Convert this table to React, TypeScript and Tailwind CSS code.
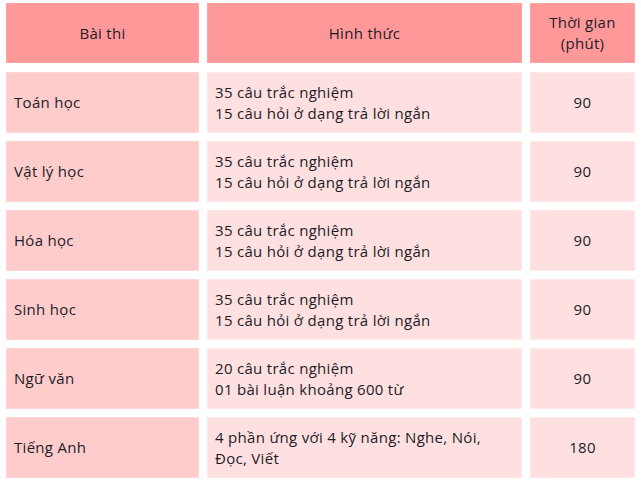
import React from 'react'

type Row = {
  subject: string
  format: string[]
  minutes: number
}

const rows: Row[] = [
  { subject: 'Toán học', format: ['35 câu trắc nghiệm', '15 câu hỏi ở dạng trả lời ngắn'], minutes: 90 },
  { subject: 'Vật lý học', format: ['35 câu trắc nghiệm', '15 câu hỏi ở dạng trả lời ngắn'], minutes: 90 },
  { subject: 'Hóa học', format: ['35 câu trắc nghiệm', '15 câu hỏi ở dạng trả lời ngắn'], minutes: 90 },
  { subject: 'Sinh học', format: ['35 câu trắc nghiệm', '15 câu hỏi ở dạng trả lời ngắn'], minutes: 90 },
  { subject: 'Ngữ văn', format: ['20 câu trắc nghiệm', '01 bài luận khoảng 600 từ'], minutes: 90 },
  { subject: 'Tiếng Anh', format: ['4 phần ứng với 4 kỹ năng: Nghe, Nói,', 'Đọc, Viết'], minutes: 180 },
]

export default function App() {
  return (
    <div className="w-[641px] h-[486px] bg-white pl-[6px] pt-[3px] text-[15px] leading-[21px] tracking-[0.3px] text-[#1c1c28] font-['Open_Sans','Lato',sans-serif]">
      <div className="grid grid-cols-[193px_315px_105px] gap-x-2">
        {/* Header */}
        <div className="h-[60px] flex items-center justify-center bg-[#ff9999] border border-[#ffa3a3]">Bài thi</div>
        <div className="h-[60px] flex items-center justify-center bg-[#ff9999] border border-[#ffa3a3]">Hình thức</div>
        <div className="h-[60px] flex flex-col items-center justify-center bg-[#ff9999] border border-[#ffa3a3] text-center">
          <span>Thời gian</span>
          <span>(phút)</span>
        </div>
      </div>

      <div className="mt-[9px] grid grid-cols-[193px_315px_105px] gap-x-2 gap-y-2">
        {rows.map((r) => (
          <React.Fragment key={r.subject}>
            <div className="h-[61px] flex items-center pl-[7px] bg-[#ffcccc] border border-[#ffd6d6]">{r.subject}</div>
            <div className="h-[61px] flex flex-col justify-center pl-[7px] bg-[#ffe0e0] border border-[#ffe8e8]">
              {r.format.map((line) => (
                <span key={line}>{line}</span>
              ))}
            </div>
            <div className="h-[61px] flex items-center justify-center bg-[#ffe0e0] border border-[#ffe8e8]">{r.minutes}</div>
          </React.Fragment>
        ))}
      </div>
    </div>
  )
}
